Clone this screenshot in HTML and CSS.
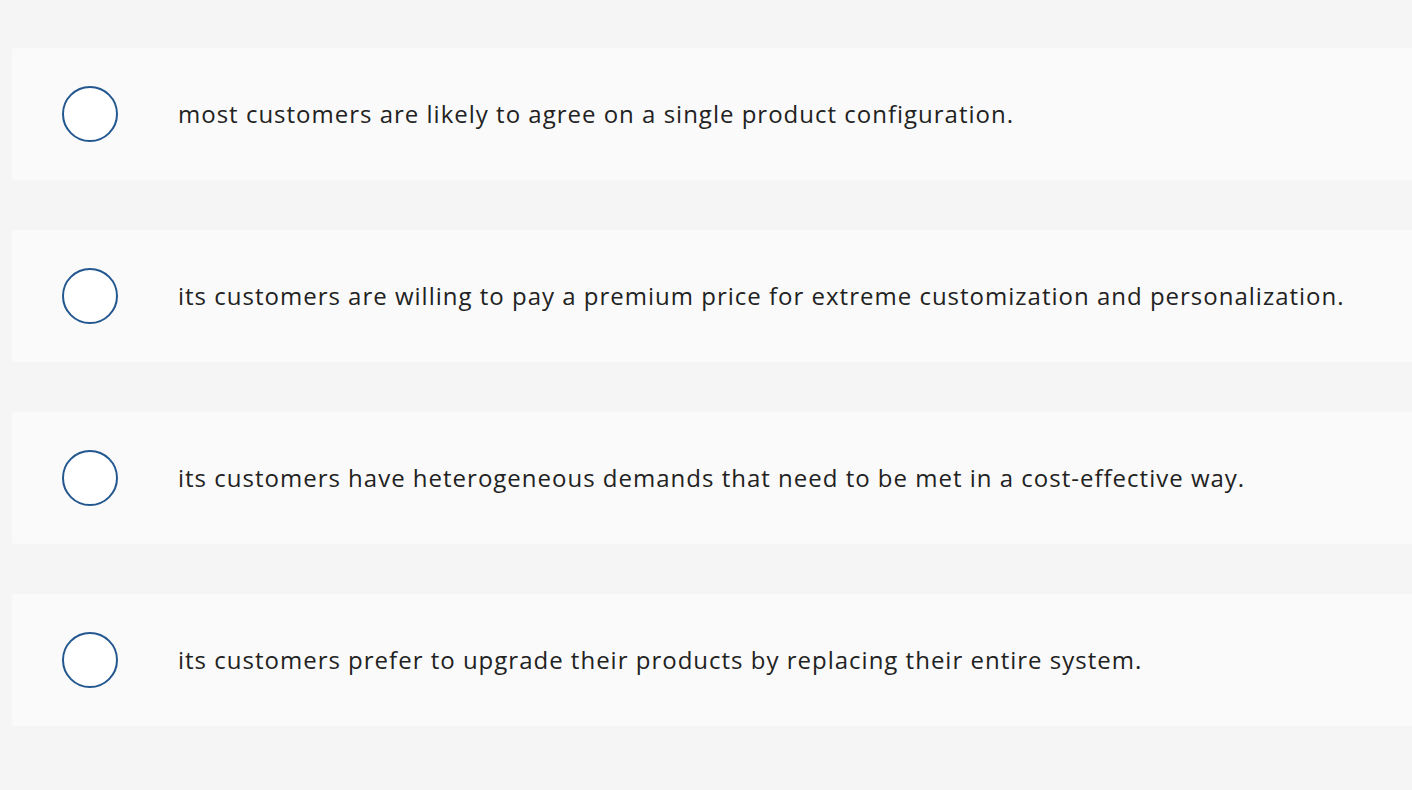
FILE: index.html
```html
<!DOCTYPE html>
<html lang="en">
<head>
<meta charset="utf-8">
<title>Choices</title>
<link rel="stylesheet" href="styles.css">
</head>
<body>
<div class="page">
  <ul class="choices">
    <li class="choice"><span class="radio"></span><span class="label">most customers are likely to agree on a single product configuration.</span></li>
    <li class="choice"><span class="radio"></span><span class="label">its customers are willing to pay a premium price for extreme customization and personalization.</span></li>
    <li class="choice"><span class="radio"></span><span class="label">its customers have heterogeneous demands that need to be met in a cost-effective way.</span></li>
    <li class="choice"><span class="radio"></span><span class="label">its customers prefer to upgrade their products by replacing their entire system.</span></li>
  </ul>
</div>
</body>
</html>
```
FILE: styles.css
```css
html, body {
  margin: 0;
  padding: 0;
  background: #f5f5f5;
}
body {
  width: 1412px;
  height: 790px;
  overflow: hidden;
  font-family: "Open Sans", "Liberation Sans", sans-serif;
  color: #222;
}
.page {
  padding: 48px 0 0 12px;
}
.choices {
  list-style: none;
  margin: 0;
  padding: 0;
  display: flex;
  flex-direction: column;
  gap: 50px;
}
.choice {
  width: 1430px;
  height: 132px;
  box-sizing: border-box;
  background: #fafafa;
  border-radius: 4px;
  display: flex;
  align-items: center;
  padding-left: 50px;
}
.radio {
  flex: none;
  width: 56px;
  height: 56px;
  box-sizing: border-box;
  border: 2px solid #23578f;
  border-radius: 50%;
  background: #fff;
  margin-right: 60px;
}
.label {
  font-size: 24px;
  line-height: 30px;
  letter-spacing: 1px;
}
```
